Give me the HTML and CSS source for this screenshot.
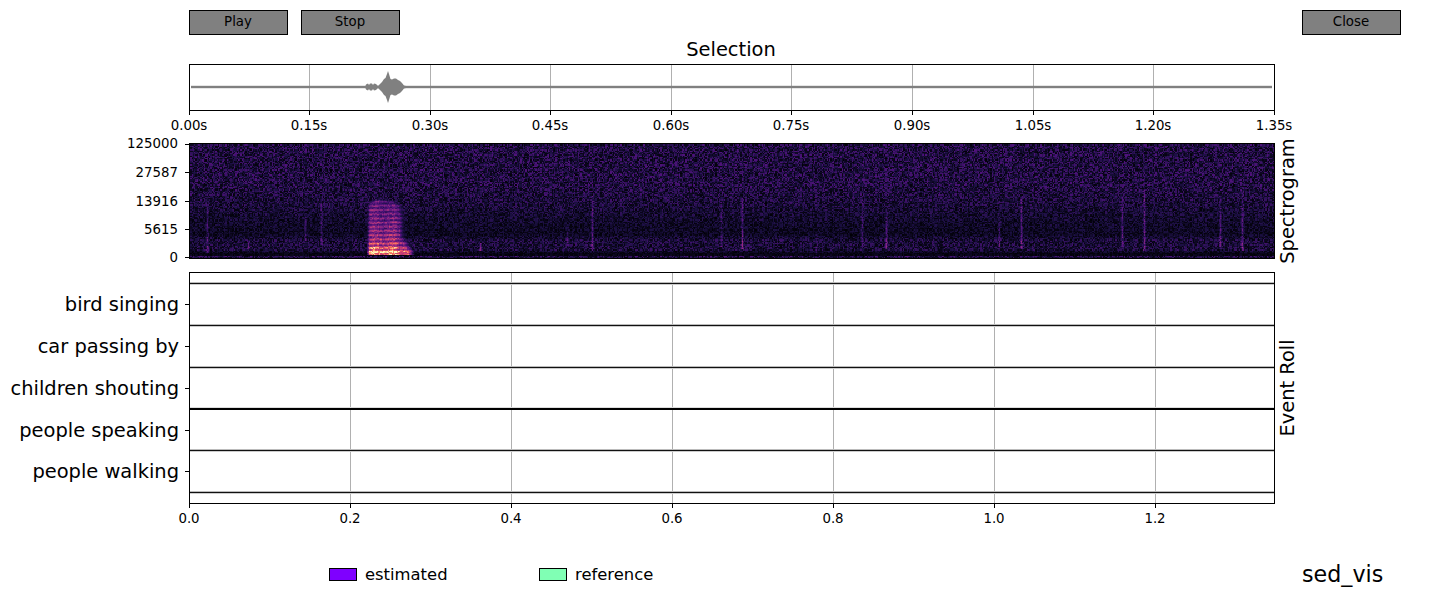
FILE: index.html
```html
<!doctype html>
<html lang="en-us">

<head>
  <meta charset="utf-8">
  <title>sed_vis</title>
  <link rel="stylesheet" href="styles.css">
</head>

<body>
  <div class="toolbar">
    <button type="button" class="btn">Play</button>
    <button type="button" class="btn">Stop</button>
    <button type="button" class="btn btn-close">Close</button>
  </div>

  <div class="plots">
    <h1 class="title">Selection</h1>

    <!-- waveform -->
    <div class="axes axes-wave">
      <i class="vgrid" style="left:119px"></i>
      <i class="vgrid" style="left:240px"></i>
      <i class="vgrid" style="left:360px"></i>
      <i class="vgrid" style="left:481px"></i>
      <i class="vgrid" style="left:601px"></i>
      <i class="vgrid" style="left:722px"></i>
      <i class="vgrid" style="left:843px"></i>
      <i class="vgrid" style="left:963px"></i>
      <svg class="wave" viewBox="0 0 1084 45" aria-hidden="true">
        <rect x="1" y="20.8" width="1081" height="2.4" fill="#808080" />
        <path fill="#808080"
          d="M175 22 L176 19.5 L178 18.5 L179 20 L180 18.5 L182 18.5 L183 20 L184 18.5 L186 19 L188 21 L190 19 L192 17 L194 14 L195.5 13 L197 9 L198 6 L199 9 L200.5 14 L202 14.5 L204 13.5 L206 13.5 L208 15 L210 16 L212 18 L214 20.5 L216 21 L217 22 L216 23 L214 23.5 L212 26 L210 28 L208 29 L206 30.5 L204 30.5 L202 29.5 L200.5 30 L199 35 L198 38 L197 35 L195.5 31 L194 30 L192 27 L190 25 L188 23 L186 25 L184 25.5 L183 24 L182 25.5 L180 25.5 L179 24 L178 25.5 L176 24.5 Z" />
      </svg>
      <span class="xtick" style="left:-1px"><b>0.00s</b></span>
      <span class="xtick" style="left:119px"><b>0.15s</b></span>
      <span class="xtick" style="left:240px"><b>0.30s</b></span>
      <span class="xtick" style="left:360px"><b>0.45s</b></span>
      <span class="xtick" style="left:481px"><b>0.60s</b></span>
      <span class="xtick" style="left:601px"><b>0.75s</b></span>
      <span class="xtick" style="left:722px"><b>0.90s</b></span>
      <span class="xtick" style="left:843px"><b>1.05s</b></span>
      <span class="xtick" style="left:963px"><b>1.20s</b></span>
      <span class="xtick" style="left:1084px"><b>1.35s</b></span>
    </div>

    <!-- spectrogram -->
    <div class="axes axes-spec">
      <canvas id="spec" class="spec" width="1084" height="114"></canvas>
      <span class="ytick ytick-top" style="top:0"><b>125000</b></span>
      <span class="ytick" style="top:28px"><b>27587</b></span>
      <span class="ytick" style="top:57px"><b>13916</b></span>
      <span class="ytick" style="top:85px"><b>5615</b></span>
      <span class="ytick" style="top:113px"><b>0</b></span>
      <span class="side-label">Spectrogram</span>
    </div>

    <!-- event roll -->
    <div class="axes axes-roll">
      <i class="vgrid" style="left:160px"></i>
      <i class="vgrid" style="left:321px"></i>
      <i class="vgrid" style="left:482px"></i>
      <i class="vgrid" style="left:643px"></i>
      <i class="vgrid" style="left:804px"></i>
      <i class="vgrid" style="left:965px"></i>
      <div class="roll-rows">
        <div class="roll-row"><span class="row-label">bird singing</span></div>
        <div class="roll-row"><span class="row-label">car passing by</span></div>
        <div class="roll-row"><span class="row-label">children shouting</span></div>
        <div class="roll-row roll-row-thick"><span class="row-label">people speaking</span></div>
        <div class="roll-row"><span class="row-label">people walking</span></div>
        <div class="roll-end"></div>
      </div>
      <span class="xtick" style="left:-1px"><b>0.0</b></span>
      <span class="xtick" style="left:160px"><b>0.2</b></span>
      <span class="xtick" style="left:321px"><b>0.4</b></span>
      <span class="xtick" style="left:482px"><b>0.6</b></span>
      <span class="xtick" style="left:643px"><b>0.8</b></span>
      <span class="xtick" style="left:804px"><b>1.0</b></span>
      <span class="xtick" style="left:965px"><b>1.2</b></span>
      <span class="side-label">Event Roll</span>
    </div>
  </div>

  <div class="footer">
    <div class="legend-item"><i class="swatch swatch-est"></i>estimated</div>
    <div class="legend-item"><i class="swatch swatch-ref"></i>reference</div>
    <div class="brand">sed_vis</div>
  </div>

  <script src="spectrogram.js"></script>
</body>

</html>
```

FILE: styles.css
```css
html,
body {
  margin: 0;
  padding: 0;
  background: #fff;
}

body {
  width: 1451px;
  height: 595px;
  overflow: hidden;
  font-family: "DejaVu Sans", sans-serif;
  font-size: 13.33px;
  color: #000;
}

.toolbar {
  display: flex;
  gap: 13px;
  box-sizing: border-box;
  width: 1401px;
  padding: 10px 0 0 189px;
}

.btn {
  width: 99px;
  height: 25px;
  padding: 0 1px 2px 0;
  background: #808080;
  border: 1px solid #000;
  border-radius: 0;
  font: inherit;
  color: #000;
}

.btn-close {
  margin-left: auto;
}

.plots {
  margin-left: 189px;
  width: 1086px;
}

.title {
  margin: 0;
  height: 29px;
  padding-right: 2px;
  font-size: 19.44px;
  font-weight: 400;
  line-height: 29px;
  text-align: center;
}

.axes {
  position: relative;
  box-sizing: border-box;
  border: 1px solid #000;
}

.axes-wave {
  height: 47px;
  margin-bottom: 32px;
}

.axes-spec {
  height: 116px;
  margin-bottom: 13px;
}

.axes-roll {
  height: 232px;
}

.wave {
  position: absolute;
  left: 0;
  top: 0;
  width: 1084px;
  height: 45px;
  overflow: visible;
}

.spec {
  display: block;
}

.vgrid {
  position: absolute;
  top: 0;
  bottom: 0;
  width: 1px;
  background: #b0b0b0;
}

.xtick {
  position: absolute;
  top: 100%;
  width: 1px;
  height: 5px;
  background: #000;
}

.xtick b {
  position: absolute;
  top: 8px;
  left: 0;
  transform: translateX(-50%);
  font-weight: 400;
  line-height: 16px;
  white-space: nowrap;
}

.ytick {
  position: absolute;
  right: 100%;
  width: 5px;
  height: 1px;
  background: #000;
}

.ytick b {
  position: absolute;
  top: -7px;
  right: 12px;
  font-weight: 400;
  line-height: 16px;
}

.ytick-top b {
  top: -8px;
}

.side-label {
  position: absolute;
  left: 100%;
  top: 50%;
  margin-left: 3px;
  writing-mode: vertical-rl;
  transform: translateY(-50%) rotate(180deg);
  font-size: 19.44px;
  line-height: 22px;
  white-space: nowrap;
}

.roll-rows {
  position: relative;
  padding-top: 10px;
}

.roll-row {
  position: relative;
  box-sizing: border-box;
  height: 41.8px;
  border-top: 1px solid #111;
  box-shadow: 0 -1px 0 #bbb, inset 0 1px 0 #ccc;
}

.roll-row-thick {
  border-top: 2px solid #000;
  box-shadow: 0 -1px 0 #ddd;
}

.roll-end {
  height: 1px;
  background: #111;
  box-shadow: 0 -1px 0 #bbb, 0 1px 0 #ccc;
}

.roll-row::after {
  content: "";
  position: absolute;
  right: 100%;
  top: 20px;
  width: 5px;
  height: 1px;
  background: #000;
}

.row-label {
  position: absolute;
  right: calc(100% + 11px);
  top: 10px;
  font-size: 19.44px;
  line-height: 22px;
  white-space: nowrap;
}

.footer {
  display: flex;
  align-items: center;
  height: 20px;
  margin-top: 60px;
  padding-left: 329px;
  font-size: 16.4px;
}

.legend-item {
  display: flex;
  align-items: center;
  flex: 0 0 210px;
  gap: 8px;
}

.swatch {
  box-sizing: border-box;
  width: 28px;
  height: 13px;
  border: 1px solid #000;
}

.swatch-est {
  background: #7f00ff;
}

.swatch-ref {
  background: #80ffb4;
}

.brand {
  margin-left: 553px;
  font-size: 22.2px;
  line-height: 20px;
}
```

FILE: spectrogram.js
```js
// fake mel spectrogram, seeded so every load draws the same picture
var seed = 20514;
function rnd() {
  seed = (seed * 1664525 + 1013904223) >>> 0;
  return seed / 4294967296;
}

var magma = [
  [0, 0, 0, 4], [0.13, 28, 16, 68], [0.25, 79, 18, 123], [0.38, 129, 37, 129],
  [0.5, 181, 54, 122], [0.63, 229, 80, 100], [0.75, 251, 135, 97], [0.88, 254, 194, 135], [1, 252, 253, 191]
];

function colour(v) {
  v = Math.max(0, Math.min(1, v));
  for (var i = 1; i < magma.length; i++) {
    if (v <= magma[i][0]) {
      var a = magma[i - 1], b = magma[i], t = (v - a[0]) / (b[0] - a[0]);
      return [a[1] + (b[1] - a[1]) * t, a[2] + (b[2] - a[2]) * t, a[3] + (b[3] - a[3]) * t];
    }
  }
  return magma[8].slice(1);
}

// background level by row, y measured from the top of the image
function rowLevel(y) {
  var stops = [[0, 0.2], [40, 0.2], [60, 0.17], [75, 0.13], [90, 0.1], [96, 0.17], [106, 0.17], [109, 0.05], [111, 0.06], [112, 0.22], [114, 0.1]];
  for (var i = 1; i < stops.length; i++) {
    if (y <= stops[i][0]) {
      var t = (y - stops[i - 1][0]) / (stops[i][0] - stops[i - 1][0]);
      return stops[i - 1][1] + (stops[i][1] - stops[i - 1][1]) * t;
    }
  }
  return 0.1;
}

// clicks: x, top, bottom, strength (page x minus 190, page y minus 144)
var clicks = [
  [17, 54, 108, 0.13], [58, 96, 106, 0.18], [115, 72, 96, 0.12], [131, 52, 100, 0.12], [290, 99, 106, 0.25],
  [377, 82, 102, 0.1], [402, 52, 106, 0.17], [531, 52, 102, 0.1], [552, 54, 104, 0.2], [626, 88, 110, 0.08],
  [672, 56, 102, 0.12], [696, 64, 104, 0.17], [809, 64, 102, 0.11], [831, 52, 104, 0.2], [932, 52, 102, 0.17],
  [954, 46, 106, 0.2], [1030, 52, 102, 0.17], [1052, 46, 106, 0.18]
];

var canvas = document.getElementById("spec");
var ctx = canvas.getContext("2d");
var w = canvas.width, h = canvas.height;
var img = ctx.createImageData(w, h);

// noise lives on a coarser grid than the pixels, like spectrogram bins
var binW = 1.25, binH = 1.25;
var cols = Math.ceil(w / binW) + 1, rows = Math.ceil(h / binH) + 1;
var bins = [], jitter = [];
for (var i = 0; i < cols * rows; i++) {
  bins.push(rnd());
  jitter.push(rnd());
}

// top edge of the speech burst: a small lobe, a notch, a shoulder
function burstTop(x) {
  if (x < 190) return 56 - (x - 176) * 0.35;
  if (x < 197) return 51 + (x - 190) * 0.4;
  if (x < 205) return 54 + (x - 197) * 0.1;
  return 55 + (x - 205) * 0.6;
}

function burstRight(y) {
  if (y < 92) return 216;
  if (y < 106) return 216 + (y - 92) * 0.6;
  return 225;
}

function burst(x, y, j) {
  var left = 176, right = burstRight(y), top = burstTop(x);
  if (x < left || x > right || y < top || y > 110) return 0;
  var edge = Math.min(1, (x - left) / 3) * Math.min(1, (right - x) / 7) * Math.min(1, (y - top) / 5);
  var depth = (y - top) / (110 - top);
  var level = 0.33 + 0.17 * depth + 0.55 * Math.pow(depth, 6);
  if (y > 103 && x > 180) level += 0.1;
  if (x > 205) level *= 1 - (x - 205) / 45;
  level *= 0.82 + 0.22 * Math.sin(y * 1.5 + x * 0.02) + 0.08 * Math.sin(x * 0.35);
  return level * edge * (0.72 + 0.5 * j);
}

for (var y = 0; y < h; y++) {
  for (var x = 0; x < w; x++) {
    var cell = Math.floor(y / binH) * cols + Math.floor(x / binW);
    var n = bins[cell];
    var v = rowLevel(y) * (0.12 + 0.95 * n + 0.2 * n * n);
    if (jitter[cell] < 0.08) v *= 0.25;

    for (var c = 0; c < clicks.length; c++) {
      var k = clicks[c];
      if (Math.abs(x - k[0]) <= 1 && y >= k[1] && y <= k[2]) {
        var fall = x == k[0] ? 1 : 0.4;
        v += k[3] * fall * (0.6 + 0.8 * jitter[cell]) * (0.5 + 0.7 * (y - k[1]) / (k[2] - k[1]));
      }
    }

    var b = burst(x, y, jitter[cell]);
    if (b > 0) v = Math.max(v, b);

    var rgb = colour(v);
    var p = (y * w + x) * 4;
    img.data[p] = rgb[0];
    img.data[p + 1] = rgb[1];
    img.data[p + 2] = rgb[2];
    img.data[p + 3] = 255;
  }
}
ctx.putImageData(img, 0, 0);
```
